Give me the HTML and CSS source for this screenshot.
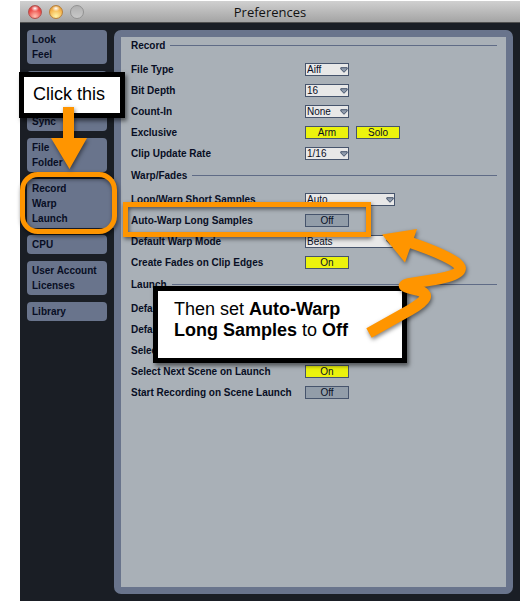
FILE: index.html
```html
<!DOCTYPE html>
<html lang="en">
<head>
<meta charset="utf-8">
<meta name="viewport" content="width=device-width, initial-scale=1">
<title>Preferences</title>
<link rel="stylesheet" href="styles.css">
</head>
<body>
<main class="window">
  <header class="titlebar">
    <div class="lights">
      <button class="light light-close" type="button" aria-label="Close"></button>
      <button class="light light-minimize" type="button" aria-label="Minimize"></button>
      <button class="light light-zoom" type="button" aria-label="Zoom" disabled></button>
    </div>
    <h1 class="title">Preferences</h1>
  </header>
  <div class="content">
    <nav class="tabs">
      <button class="tab" type="button"><span>Look</span><span>Feel</span></button>
      <button class="tab" type="button" aria-label="Audio"><span></span></button>
      <button class="tab" type="button" aria-label="MIDI Sync"><span></span><span>Sync</span></button>
      <button class="tab" type="button"><span>File</span><span>Folder</span></button>
      <button class="tab tab-selected" type="button"><span>Record</span><span>Warp</span><span>Launch</span></button>
      <button class="tab" type="button"><span>CPU</span></button>
      <button class="tab" type="button"><span>User Account</span><span>Licenses</span></button>
      <button class="tab" type="button"><span>Library</span></button>
    </nav>
    <form class="panel">
      <section class="section">
        <h2 class="heading">Record</h2>
        <div class="row"><label for="file-type">File Type</label>
          <span class="dropdown"><select id="file-type"><option>Aiff</option></select><svg class="caret" viewBox="0 0 8 6"><path d="M.8 .7H7.200V2L4 5.300L.8 2Z"/></svg></span></div>
        <div class="row"><label for="bit-depth">Bit Depth</label>
          <span class="dropdown"><select id="bit-depth"><option>16</option></select><svg class="caret" viewBox="0 0 8 6"><path d="M.8 .7H7.200V2L4 5.300L.8 2Z"/></svg></span></div>
        <div class="row"><label for="count-in">Count-In</label>
          <span class="dropdown"><select id="count-in"><option>None</option></select><svg class="caret" viewBox="0 0 8 6"><path d="M.8 .7H7.200V2L4 5.300L.8 2Z"/></svg></span></div>
        <div class="row"><label for="arm">Exclusive</label>
          <button class="toggle on" id="arm" type="button">Arm</button><button class="toggle on" type="button">Solo</button></div>
        <div class="row"><label for="update-rate">Clip Update Rate</label>
          <span class="dropdown"><select id="update-rate"><option>1/16</option></select><svg class="caret" viewBox="0 0 8 6"><path d="M.8 .7H7.200V2L4 5.300L.8 2Z"/></svg></span></div>
      </section>
      <section class="section">
        <h2 class="heading">Warp/Fades</h2>
        <div class="row"><label for="short-samples">Loop/Warp Short Samples</label>
          <span class="dropdown wide"><select id="short-samples"><option>Auto</option></select><svg class="caret" viewBox="0 0 8 6"><path d="M.8 .7H7.200V2L4 5.300L.8 2Z"/></svg></span></div>
        <div class="row"><label for="auto-warp">Auto-Warp Long Samples</label>
          <button class="toggle" id="auto-warp" type="button">Off</button></div>
        <div class="row"><label for="warp-mode">Default Warp Mode</label>
          <span class="dropdown wide"><select id="warp-mode"><option>Beats</option></select><svg class="caret" viewBox="0 0 8 6"><path d="M.8 .7H7.200V2L4 5.300L.8 2Z"/></svg></span></div>
        <div class="row"><label for="fades">Create Fades on Clip Edges</label>
          <button class="toggle on" id="fades" type="button">On</button></div>
      </section>
      <section class="section">
        <h2 class="heading">Launch</h2>
        <div class="row"><b>Default</b></div>
        <div class="row"><b>Default</b></div>
        <div class="row"><b>Select</b></div>
        <div class="row"><label for="next-scene">Select Next Scene on Launch</label>
          <button class="toggle on" id="next-scene" type="button">On</button></div>
        <div class="row"><label for="scene-record">Start Recording on Scene Launch</label>
          <button class="toggle" id="scene-record" type="button">Off</button></div>
      </section>
    </form>
  </div>
</main>
<div class="ring ring-tab"></div>
<div class="ring ring-row"></div>
<p class="note note-click">Click this</p>
<p class="note note-set">Then set <b>Auto-Warp Long Samples</b> to <b>Off</b></p>
<svg class="arrows" width="520" height="601" viewBox="0 0 520 601" aria-hidden="true">
  <path class="fill" d="M63 107H74V138H87L69.5 169L51 138H63Z"/>
  <g class="curve">
    <path class="stroke" d="M369 333L410 310C427 300 431 294 417 290C402 287 400 285 413 283L438 279C463 274 466 268 452 260C440 253 427 248 406 241"/>
    <path class="fill" d="M382 234.500L417 229L413 240.500L409 251L405 262.500Z"/>
  </g>
</svg>
</body>
</html>
```
FILE: styles.css
```css
* {
  box-sizing: border-box;
}

body {
  position: relative;
  margin: 0;
  padding: 1px 0 0 20px;
  background: #fff;
  color: #080e24;
  font-family: "Liberation Sans", Arial, sans-serif;
  font-size: 10px;
}

button,
select {
  margin: 0;
  color: inherit;
  font: inherit;
}

.window {
  display: flex;
  flex-direction: column;
  min-height: calc(100vh - 1px);
  background: #1a1e25;
}

.titlebar {
  display: grid;
  grid-template-columns: 1fr auto 1fr;
  align-items: center;
  height: 22px;
  padding: 0 8px;
  border-bottom: 1px solid #505050;
  background: linear-gradient(#d0d0d0, #a4a4a4);
}

.lights {
  display: flex;
  gap: 7px;
}

.light {
  width: 14px;
  height: 14px;
  padding: 0;
  border: 1px solid #888;
  border-radius: 50%;
}

.light-close {
  border-color: #b0504c;
  background: radial-gradient(ellipse 4px 3px at 50% 20%, #fff, transparent), radial-gradient(circle at 50% 85%, #ffc0b0, #ec4a46 60%, #c83430);
}

.light-minimize {
  border-color: #b8803a;
  background: radial-gradient(ellipse 4px 3px at 50% 20%, #fff, transparent), radial-gradient(circle at 50% 85%, #fff4a8, #f5b44c 60%, #d08828);
}

.light-zoom {
  border-color: #929292;
  background: linear-gradient(#b0b0b0, #c8c8c8);
}

.title {
  margin: 0;
  color: #111;
  font: 13px/20px "Open Sans", "Noto Sans", sans-serif;
}

.content {
  display: flex;
  flex: 1;
  padding: 7px;
}

.tabs {
  display: flex;
  flex: 0 0 87px;
  flex-direction: column;
  gap: 7px;
}

.tab {
  display: flex;
  flex-direction: column;
  margin-right: 7px;
  padding: 2px 5px;
  border: 0;
  border-radius: 4px;
  background: #69748c;
  font-weight: bold;
  line-height: 15px;
  text-align: left;
}

.tab span {
  min-height: 15px;
}

.tab-selected {
  margin-right: 0;
  border-radius: 4px 0 0 4px;
}

.panel {
  flex: 1;
  min-width: 0;
  padding: 0 9px 0 10px;
  border: 7px solid #69748c;
  border-radius: 7px;
  background: #a9b0b7;
}

.section + .section {
  margin-top: 3px;
}

.heading {
  display: flex;
  align-items: center;
  gap: 5px;
  margin: 0 0 5px;
  font-size: 10px;
  line-height: 17px;
}

.heading::after {
  flex: 1;
  height: 1px;
  background: #5f6b86;
  content: "";
}

.row {
  display: grid;
  grid-template-columns: 174px auto auto 1fr;
  align-items: center;
  height: 21px;
}

.row label {
  font-weight: bold;
  white-space: nowrap;
}

.dropdown {
  position: relative;
  display: flex;
  width: 44px;
}

.wide {
  width: 90px;
}

.dropdown select {
  width: 100%;
  height: 13px;
  padding: 0 1px;
  border: 1px solid #46546c;
  border-radius: 0;
  background: #e8e8e8;
  appearance: none;
  line-height: 11px;
}

.caret {
  position: absolute;
  top: 4px;
  right: 1px;
  width: 8px;
  height: 6px;
  fill: #8f9bac;
  stroke: #46546c;
}

.toggle {
  width: 44px;
  height: 13px;
  padding: 0;
  border: 1px solid #46546c;
  background: #929da9;
  line-height: 11px;
}

.toggle + .toggle {
  margin-left: 7px;
}

.on {
  background: #ecf30d;
}

.ring {
  position: absolute;
  border: 5px solid #ff9500;
  filter: drop-shadow(1px 2px 2px rgb(0 0 0 / 55%));
}

.ring-tab {
  top: 172px;
  left: 20px;
  width: 97px;
  height: 62px;
  border-radius: 18px;
}

.ring-row {
  top: 202px;
  left: 123px;
  width: 248px;
  height: 35px;
}

.note {
  position: absolute;
  margin: 0;
  border: 5px solid #000;
  background: #fff;
  box-shadow: 2px 3px 4px rgb(0 0 0 / 50%);
  color: #000;
  font-size: 18px;
  line-height: 21px;
}

.note-click {
  top: 72px;
  left: 19px;
  width: 106px;
  height: 46px;
  padding: 7px 9px;
}

.note-set {
  top: 286px;
  left: 153px;
  width: 254px;
  height: 77px;
  padding: 8px 44px 8px 16px;
}

.arrows {
  position: absolute;
  top: 0;
  left: 0;
  filter: drop-shadow(1px 2px 2px rgb(0 0 0 / 50%));
  pointer-events: none;
}

.fill {
  fill: #ff9500;
}

.stroke {
  fill: none;
  stroke: #ff9500;
  stroke-width: 11px;
}
```
